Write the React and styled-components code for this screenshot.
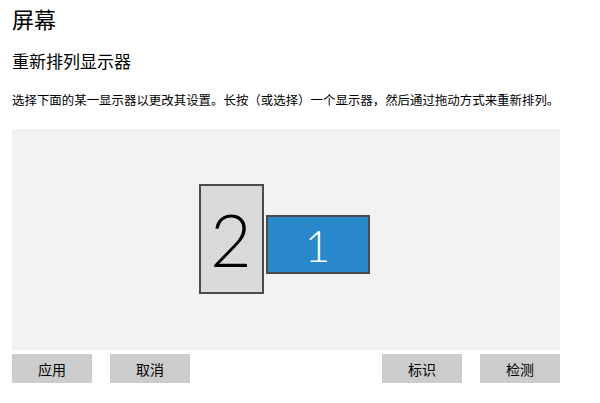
import React from 'react'
import styled, { createGlobalStyle } from 'styled-components'

const GlobalStyle = createGlobalStyle`
  html, body {
    margin: 0;
    padding: 0;
    background: #ffffff;
  }
  body {
    font-family: "Noto Sans CJK SC", "Noto Sans", sans-serif;
    color: #000000;
  }
`

const Page = styled.div`
  width: 600px;
  height: 403px;
  padding: 3px 0 0 12px;
  box-sizing: border-box;
  overflow: hidden;
`

const Title = styled.h1`
  margin: 0;
  font-size: 22px;
  line-height: 30px;
  font-weight: 400;
`

const SubTitle = styled.h2`
  margin: 16px 0 0;
  font-size: 17px;
  line-height: 24px;
  font-weight: 400;
`

const Description = styled.p`
  margin: 18px 0 0;
  font-size: 12.45px;
  line-height: 18px;
  white-space: nowrap;
`

const Canvas = styled.div`
  margin-top: 20px;
  width: 548px;
  height: 221px;
  background: #f2f2f2;
  display: flex;
  justify-content: center;
  align-items: flex-start;
  gap: 2px;
  padding-top: 55px;
  padding-right: 4px;
  box-sizing: border-box;
`

const Monitor = styled.div`
  width: ${p => p.$w}px;
  height: ${p => p.$h}px;
  margin-top: ${p => p.$top || 0}px;
  box-sizing: border-box;
  border: 2px solid #4a4a4a;
  background: ${p => (p.$active ? '#2987cc' : '#dadada')};
  color: ${p => (p.$active ? '#ffffff' : '#000000')};
  display: flex;
  align-items: center;
  justify-content: center;
  font-family: Lato, "Open Sans", "DejaVu Sans", sans-serif;
  font-weight: 300;
  font-size: ${p => p.$size}px;
  line-height: 1;
`

const ButtonRow = styled.div`
  margin-top: 4px;
  width: 548px;
  display: flex;
  justify-content: space-between;
`

const Group = styled.div`
  display: flex;
  gap: 18px;
`

const Button = styled.button`
  width: 80px;
  height: 29px;
  border: none;
  background: #cccccc;
  font-family: "Noto Sans CJK SC", sans-serif;
  font-size: 14px;
  color: #000000;
  padding: 0;
  cursor: pointer;
`

export default function App() {
  return (
    <>
      <GlobalStyle />
      <Page>
        <Title>屏幕</Title>
        <SubTitle>重新排列显示器</SubTitle>
        <Description>
          选择下面的某一显示器以更改其设置。长按（或选择）一个显示器，然后通过拖动方式来重新排列。
        </Description>
        <Canvas>
          <Monitor $w={65} $h={110} $size={72}>2</Monitor>
          <Monitor $w={104} $h={59} $top={31} $size={44} $active>1</Monitor>
        </Canvas>
        <ButtonRow>
          <Group>
            <Button>应用</Button>
            <Button>取消</Button>
          </Group>
          <Group>
            <Button>标识</Button>
            <Button>检测</Button>
          </Group>
        </ButtonRow>
      </Page>
    </>
  )
}
